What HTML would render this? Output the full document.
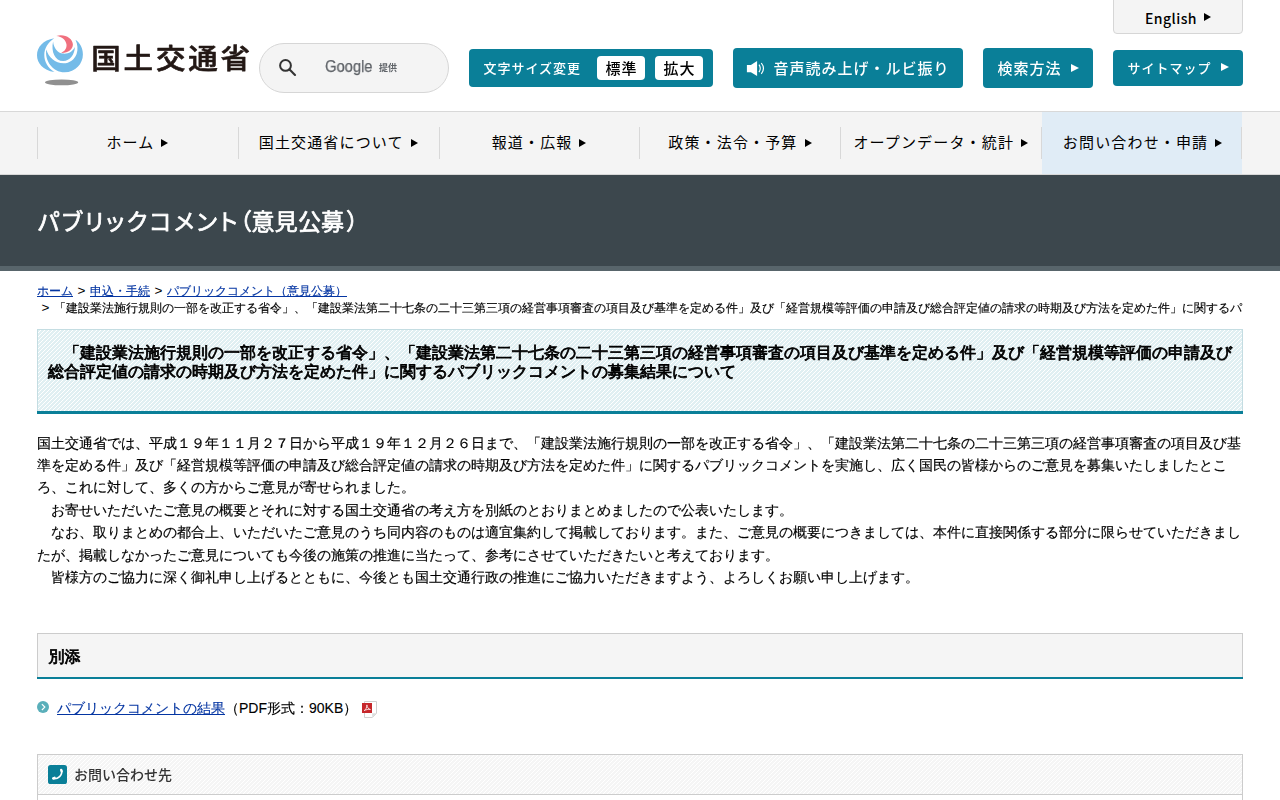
<!DOCTYPE html>
<html lang="ja">
<head>
<meta charset="utf-8">
<title>「建設業法施行規則の一部を改正する省令」等に関するパブリックコメントの募集結果について - 国土交通省</title>
<style>
*{box-sizing:border-box;}
html,body{margin:0;padding:0;width:1280px;height:800px;overflow:hidden;}
body{background:#fff;color:#000;
  font-family:"Liberation Sans","WenQuanYi Zen Hei","IPAGothic",sans-serif;font-size:14px;line-height:22.4px;}
a{color:#0435a2;text-decoration:underline;}
.kn{letter-spacing:-0.0234375em;}
.wrap{width:1206px;margin:0 auto;position:relative;}

/* ---------- header ---------- */
#header{border-bottom:1px solid #d8d8d8;height:112px;position:relative;font-family:"Noto Sans CJK JP","Liberation Sans",sans-serif;}
#header .wrap{height:111px;}
.logo{position:absolute;left:0;top:33px;width:215px;height:54px;text-decoration:none;color:#231815;}
.logo svg{position:absolute;left:-7px;top:-5px;}
.logo text{font-size:29.5px;font-weight:500;letter-spacing:2.85px;fill:#231815;stroke:#231815;stroke-width:0.65px;stroke-linejoin:round;}
.logo svg{will-change:transform;}
.search{position:absolute;left:222px;top:43px;width:190px;height:50px;border:1px solid #d6d6d6;border-radius:25px;background:#f4f4f4;}
.search svg{position:absolute;left:18px;top:14px;}
.search .g{position:absolute;left:65px;top:10px;font-size:16.5px;line-height:24px;color:#5f6368;font-family:"Liberation Sans",sans-serif;letter-spacing:-0.1px;transform:scaleX(0.9);transform-origin:0 50%;will-change:transform;-webkit-text-stroke:0.25px #5f6368;}
.search .t{position:absolute;left:119px;top:14px;font-size:9px;line-height:20px;color:#5f6368;font-weight:700;white-space:nowrap;will-change:transform;}
.btn{position:absolute;background:#0a7f98;color:#fff;border-radius:4px;text-decoration:none;font-weight:500;white-space:nowrap;}
.tri{display:inline-block;width:0;height:0;border-style:solid;border-width:4.6px 0 4.6px 8px;border-color:transparent transparent transparent currentColor;}
.fsize{left:432px;top:49px;width:244px;height:38px;}
.fsize .lbl{position:absolute;left:14.5px;top:0;line-height:38px;font-size:13px;letter-spacing:1px;}
.fsize .b{position:absolute;top:7px;width:48px;height:24px;background:#fff;color:#000;border-radius:4px;font-size:15px;letter-spacing:1px;text-indent:1px;line-height:23px;text-align:center;}
.voice{left:696px;top:48px;width:230px;height:40px;font-size:15px;letter-spacing:1px;line-height:39px;}
.voice svg{position:absolute;left:13px;top:12px;}
.voice span{position:absolute;left:40.5px;top:0;}
.how{left:946px;top:48px;width:110px;height:40px;font-size:15px;letter-spacing:1px;line-height:39px;}
.how span{position:absolute;left:14.5px;top:0;}
.how .tri{position:absolute;left:88px;top:16.4px;}
.smap{left:1076px;top:50px;width:130px;height:36px;font-size:13px;letter-spacing:1px;line-height:36px;}
.smap span{position:absolute;left:14.5px;top:0;}
.smap .tri{position:absolute;left:108px;top:13.4px;}
.eng{position:absolute;left:1076px;top:-1px;width:130px;height:35px;background:#f4f4f4;border:1px solid #d6d6d6;border-radius:0 0 4px 4px;color:#000;text-decoration:none;font-size:14px;font-weight:500;letter-spacing:0.45px;}
.eng span{position:absolute;left:31px;top:6px;line-height:24px;}
.eng .tri{position:absolute;left:90px;top:13.4px;border-width:4.6px 0 4.6px 7px;}

/* ---------- nav ---------- */
#gnav{height:63px;background:#f4f4f4;border-bottom:1px solid #d8d8d8;font-family:"Noto Sans CJK JP","Liberation Sans",sans-serif;}
#gnav ul{list-style:none;margin:0 auto;padding:0;width:1206px;height:62px;display:flex;}
#gnav li{width:200.833px;flex:none;height:62px;position:relative;text-align:center;font-size:15px;letter-spacing:1.16px;line-height:60px;white-space:nowrap;}
#gnav li:before{content:"";position:absolute;left:0;top:15px;width:1px;height:32px;background:#d8d8d8;}
#gnav li.last:after{content:"";position:absolute;right:0;top:15px;width:1px;height:32px;background:#d8d8d8;}
#gnav li.on{background:linear-gradient(#e0ecf6,#e0ecf6) 1px 0/200px 100% no-repeat;}
#gnav a{color:#000;text-decoration:none;display:block;}
#gnav li.last a{padding-left:2px;}
#gnav .tri{margin-left:7px;border-width:4.6px 0 4.6px 7px;position:relative;top:-1.5px;}

/* ---------- title ---------- */
#ttl{height:96px;background:#3c474d;border-bottom:5px solid #58656b;font-family:"Noto Sans CJK JP","Liberation Sans",sans-serif;}
#ttl h1 .k{letter-spacing:2.5px;}
#ttl h1 svg{display:block;overflow:visible;will-change:transform;}
#ttl h1 text{fill:#fff;stroke:#fff;stroke-width:0.7px;stroke-linejoin:round;stroke-linecap:round;font-weight:400;font-size:23px;letter-spacing:0.2px;font-feature-settings:"palt";}
#ttl h1{margin:0 auto;width:1206px;color:#fff;font-size:24px;line-height:91px;font-weight:500;font-feature-settings:"palt";letter-spacing:0;}

/* ---------- content ---------- */
.crumb i{-webkit-text-stroke:0;font-style:normal;display:inline-block;width:17px;text-align:center;font-size:13.5px;line-height:1;}
.crumb{font-family:"Liberation Sans","WenQuanYi Zen Hei","IPAGothic",sans-serif;-webkit-text-stroke:0.15px currentColor;font-size:12px;line-height:17px;margin-top:12px;height:34px;overflow:hidden;white-space:nowrap;}
.crumb div{overflow:hidden;}
h2.title{margin:12px 0 0;border:1px solid #c4dde2;border-bottom:0;height:82px;padding:13px 9px 0 10px;font-size:16px;line-height:19px;font-weight:normal;-webkit-text-stroke:0.8px #000;white-space:nowrap;position:relative;margin-bottom:3px;
  background:#e0eff2;}
h2.title svg,.contact h4 svg.pat{position:absolute;left:0;top:0;width:100%;height:100%;}
h2.title span{position:relative;}
h2.title:after{content:"";position:absolute;left:-1px;right:-1px;top:100%;height:3px;background:#0a7f98;}
.body{margin-top:20.6px;-webkit-text-stroke:0.18px #000;}
.body p{margin:0;white-space:nowrap;}
h3.sub:after{content:"";position:absolute;left:-1px;right:-1px;top:100%;height:2px;background:#0a7f98;}
h3.sub{position:relative;margin:44.4px 0 2px;height:44px;border:1px solid #ccc;border-bottom:0;background:#f5f5f5;padding:0 10px 0 10.5px;font-size:16px;line-height:45px;font-weight:normal;-webkit-text-stroke:0.8px #000;}
.pdf{-webkit-text-stroke:0.12px currentColor;margin-top:20px;position:relative;height:24px;padding-left:20px;}
.pdf .bul{position:absolute;left:0;top:4px;}
.pdf .ico{position:absolute;left:325px;top:3px;}
.contact{margin-top:33px;border:1px solid #ccc;border-bottom:0;height:46px;}
.contact h4{margin:0;height:40px;border-bottom:1px solid #ccc;font-size:14px;font-weight:500;line-height:38px;padding-left:36px;position:relative;color:#333;
  background:#f5f5f5;font-family:"Noto Sans CJK JP","Liberation Sans",sans-serif;}
.contact h4 svg.ic{position:absolute;left:10px;top:10px;}
.contact h4 span{position:relative;display:inline-block;will-change:transform;}
</style>
</head>
<body>
<div id="header">
  <div class="wrap">
    <a class="logo" href="#">
      <svg width="230" height="64" viewBox="30 28 230 64">
        <ellipse cx="61.6" cy="82.4" rx="16.6" ry="2.9" fill="#909090"/>
        <path d="M54.2 38.3 C43 40 37 47.5 37 55.2 C37 63 43 70.3 54.4 72.1 C47.5 67.5 44.3 61.5 44.3 55 C44.3 48.5 47.8 42.5 54.2 38.3 Z" fill="#74bbe8"/>
        <path d="M46.3 49.4 C44.6 60.5 52.5 72.2 64.6 72.2 C75.5 72.2 82.9 63.5 82.9 54.4 C82.9 48.3 80.2 43.2 75.5 39.8 C77.6 44 78.2 49.8 76.6 54 C74.5 59.6 69.6 63.3 63.6 63.3 C55.2 63.3 48.4 57 46.3 49.4 Z" fill="#74bbe8"/>
        <path d="M53.1 41.4 C50.8 51.5 55 61 63.2 61 C70.2 61 74.6 54.5 74.9 47 C72.6 51.6 68.2 54.2 63 53.6 C57.6 53 53.6 48 53.1 41.4 Z" fill="#74bbe8"/>
        <path d="M56.3 36 C64 33.4 72.9 38 72.9 44.6 C72.9 49.4 68 53.2 61.2 52.9 C65 51.2 66.9 48.2 66.5 44.6 C66 40.2 62 36.6 56.3 36 Z" fill="#f0707e"/>
      
        <text x="91.2" y="0" transform="translate(0 68.6) scale(1 0.95)">国土交通省</text>
      </svg>
    </a>
    <div class="search">
      <svg width="20" height="20" viewBox="0 0 20 20"><circle cx="7.5" cy="7.45" r="5.4" fill="none" stroke="#333" stroke-width="2"/><path d="M11.6 11.6 L17 17" stroke="#333" stroke-width="2.1" stroke-linecap="round"/></svg>
      <span class="g">Google</span><span class="t">提供</span>
    </div>
    <div class="btn fsize"><span class="lbl">文字サイズ変更</span><span class="b" style="left:128px">標準</span><span class="b" style="left:186px">拡大</span></div>
    <a class="btn voice" href="#"><svg width="20" height="17" viewBox="0 0 20 17"><path d="M0.9 4.9 H4.9 L11.1 0.9 V15.9 L4.9 12.2 H0.9 Z" fill="#fff"/><path d="M13 4.6 Q15.6 8.4 13 12.2" fill="none" stroke="#fff" stroke-width="1.2"/><path d="M15.3 3 Q19.6 8.4 15.3 13.8" fill="none" stroke="#fff" stroke-width="1.2"/></svg><span>音声読み上げ・ルビ振り</span></a>
    <a class="btn how" href="#"><span>検索方法</span><i class="tri"></i></a>
    <a class="btn smap" href="#"><span>サイトマップ</span><i class="tri"></i></a>
    <a class="eng" href="#"><span>English</span><i class="tri"></i></a>
  </div>
</div>
<div id="gnav">
  <ul>
    <li><a href="#">ホーム<i class="tri"></i></a></li>
    <li><a href="#">国土交通省について<i class="tri"></i></a></li>
    <li><a href="#">報道・広報<i class="tri"></i></a></li>
    <li><a href="#">政策・法令・予算<i class="tri"></i></a></li>
    <li><a href="#">オープンデータ・統計<i class="tri"></i></a></li>
    <li class="on last"><a href="#">お問い合わせ・申請<i class="tri"></i></a></li>
  </ul>
</div>
<div id="ttl"><h1><svg width="600" height="91" viewBox="0 0 600 91"><text x="0.8" y="54.5"><tspan class="k">パブリックコメント</tspan>（意見公募<tspan dx="2.6">）</tspan></text></svg></h1></div>
<div class="wrap">
  <div class="crumb">
    <div><a href="#"><span class="kn">ホ</span>ー<span class="kn">ム</span></a><i>&gt;</i><a href="#">申込・手続</a><i>&gt;</i><a href="#"><span class="kn">パブリックコメント</span>（意見公募）</a></div>
    <div><i>&gt;</i>「建設業法施行規則<span class="kn">の</span>一部<span class="kn">を</span>改正<span class="kn">する</span>省令」、「建設業法第二十七条<span class="kn">の</span>二十三第三項<span class="kn">の</span>経営事項審査<span class="kn">の</span>項目及<span class="kn">び</span>基準<span class="kn">を</span>定<span class="kn">める</span>件」及<span class="kn">び</span>「経営規模等評価<span class="kn">の</span>申請及<span class="kn">び</span>総合評定値<span class="kn">の</span>請求<span class="kn">の</span>時期及<span class="kn">び</span>方法<span class="kn">を</span>定<span class="kn">めた</span>件」<span class="kn">に</span>関<span class="kn">するパブリックコメントの</span>募集結果<span class="kn">について</span></div>
  </div>
  <h2 class="title"><svg shape-rendering="crispEdges"><defs><pattern id="p1" x="3" width="4" height="4" patternUnits="userSpaceOnUse"><rect width="4" height="4" fill="#e0eff2"/><rect x="3" y="0" width="1" height="1" fill="#fff"/><rect x="2" y="1" width="1" height="1" fill="#fff"/><rect x="1" y="2" width="1" height="1" fill="#fff"/><rect x="0" y="3" width="1" height="1" fill="#fff"/></pattern></defs><rect width="100%" height="100%" fill="url(#p1)"/></svg><span>　「建設業法施行規則<span class="kn">の</span>一部<span class="kn">を</span>改正<span class="kn">する</span>省令」、「建設業法第二十七条<span class="kn">の</span>二十三第三項<span class="kn">の</span>経営事項審査<span class="kn">の</span>項目及<span class="kn">び</span>基準<span class="kn">を</span>定<span class="kn">める</span>件」及<span class="kn">び</span>「経営規模等評価<span class="kn">の</span>申請及<span class="kn">び</span><br>総合評定値<span class="kn">の</span>請求<span class="kn">の</span>時期及<span class="kn">び</span>方法<span class="kn">を</span>定<span class="kn">めた</span>件」<span class="kn">に</span>関<span class="kn">するパブリックコメントの</span>募集結果<span class="kn">について</span></span></h2>
  <div class="body">
    <p>国土交通省<span class="kn">では</span>、平成１９年１１月２７日<span class="kn">から</span>平成１９年１２月２６日<span class="kn">まで</span>、「建設業法施行規則<span class="kn">の</span>一部<span class="kn">を</span>改正<span class="kn">する</span>省令」、「建設業法第二十七条<span class="kn">の</span>二十三第三項<span class="kn">の</span>経営事項審査<span class="kn">の</span>項目及<span class="kn">び</span>基<br>準<span class="kn">を</span>定<span class="kn">める</span>件」及<span class="kn">び</span>「経営規模等評価<span class="kn">の</span>申請及<span class="kn">び</span>総合評定値<span class="kn">の</span>請求<span class="kn">の</span>時期及<span class="kn">び</span>方法<span class="kn">を</span>定<span class="kn">めた</span>件」<span class="kn">に</span>関<span class="kn">するパブリックコメントを</span>実施<span class="kn">し</span>、広<span class="kn">く</span>国民<span class="kn">の</span>皆様<span class="kn">からのご</span>意見<span class="kn">を</span>募集<span class="kn">いたしましたとこ</span><br><span class="kn">ろ</span>、<span class="kn">これに</span>対<span class="kn">して</span>、多<span class="kn">くの</span>方<span class="kn">からご</span>意見<span class="kn">が</span>寄<span class="kn">せられました</span>。</p>
    <p>　<span class="kn">お</span>寄<span class="kn">せいただいたご</span>意見<span class="kn">の</span>概要<span class="kn">とそれに</span>対<span class="kn">する</span>国土交通省<span class="kn">の</span>考<span class="kn">え</span>方<span class="kn">を</span>別紙<span class="kn">のとおりまとめましたので</span>公表<span class="kn">いたします</span>。</p>
    <p>　<span class="kn">なお</span>、取<span class="kn">りまとめの</span>都合上、<span class="kn">いただいたご</span>意見<span class="kn">のうち</span>同内容<span class="kn">のものは</span>適宜集約<span class="kn">して</span>掲載<span class="kn">しております</span>。<span class="kn">また</span>、<span class="kn">ご</span>意見<span class="kn">の</span>概要<span class="kn">につきましては</span>、本件<span class="kn">に</span>直接関係<span class="kn">する</span>部分<span class="kn">に</span>限<span class="kn">らせていただきまし</span><br><span class="kn">たが</span>、掲載<span class="kn">しなかったご</span>意見<span class="kn">についても</span>今後<span class="kn">の</span>施策<span class="kn">の</span>推進<span class="kn">に</span>当<span class="kn">たって</span>、参考<span class="kn">にさせていただきたいと</span>考<span class="kn">えております</span>。</p>
    <p>　皆様方<span class="kn">のご</span>協力<span class="kn">に</span>深<span class="kn">く</span>御礼申<span class="kn">し</span>上<span class="kn">げるとともに</span>、今後<span class="kn">とも</span>国土交通行政<span class="kn">の</span>推進<span class="kn">にご</span>協力<span class="kn">いただきますよう</span>、<span class="kn">よろしくお</span>願<span class="kn">い</span>申<span class="kn">し</span>上<span class="kn">げます</span>。</p>
  </div>
  <h3 class="sub">別添</h3>
  <div class="pdf">
    <svg class="bul" width="12" height="12" viewBox="0 0 12 12"><circle cx="6" cy="6" r="6" fill="#5aafba"/><path d="M4.9 3.2 L7.8 6.1 L4.9 9" fill="none" stroke="#fff" stroke-width="1.2"/></svg>
    <a href="#"><span class="kn">パブリックコメントの</span>結果</a>（PDF形式：90KB）
    <svg class="ico" width="16" height="19" viewBox="0 0 16 19"><path d="M2.5 1.5 H14.5 V13.3 L10.3 17.5 H2.5 Z" fill="#fff" stroke="#d0d0d0" stroke-width="1"/><path d="M14.3 13.2 H10.2 V17.3 Z" fill="#dcdcdc"/><rect x="0" y="3" width="10" height="10" fill="#c6272b"/><path d="M2.2 10.6 C3.8 9.8 4.8 7.6 4.9 4.9 C5.1 7.4 6.3 9 8.4 9.5 C6.4 9.1 3.9 9.7 2.2 10.6 Z" fill="none" stroke="#fbe9e9" stroke-width="0.9" stroke-linejoin="round"/></svg>
  </div>
  <div class="contact">
    <h4><svg class="pat" shape-rendering="crispEdges"><defs><pattern id="p2" width="4" height="4" patternUnits="userSpaceOnUse"><rect width="4" height="4" fill="#f5f5f5"/><rect x="3" y="0" width="1" height="1" fill="#fff"/><rect x="2" y="1" width="1" height="1" fill="#fff"/><rect x="1" y="2" width="1" height="1" fill="#fff"/><rect x="0" y="3" width="1" height="1" fill="#fff"/></pattern></defs><rect width="100%" height="100%" fill="url(#p2)"/></svg><svg class="ic" width="19" height="19" viewBox="0 0 19 19"><rect width="19" height="19" rx="2.6" fill="#0a7f98"/><path d="M13.4 5 Q14.5 8.8 11.6 11.6 Q8.8 14.2 5.3 13.6" fill="none" stroke="#fff" stroke-width="1.6" stroke-linecap="round"/><path d="M13.2 4.9 L13.7 6.4 M5.2 13.3 L6.6 12.8" fill="none" stroke="#fff" stroke-width="2.3" stroke-linecap="round"/></svg><span>お問い合わせ先</span></h4>
  </div>
</div>
</body>
</html>
